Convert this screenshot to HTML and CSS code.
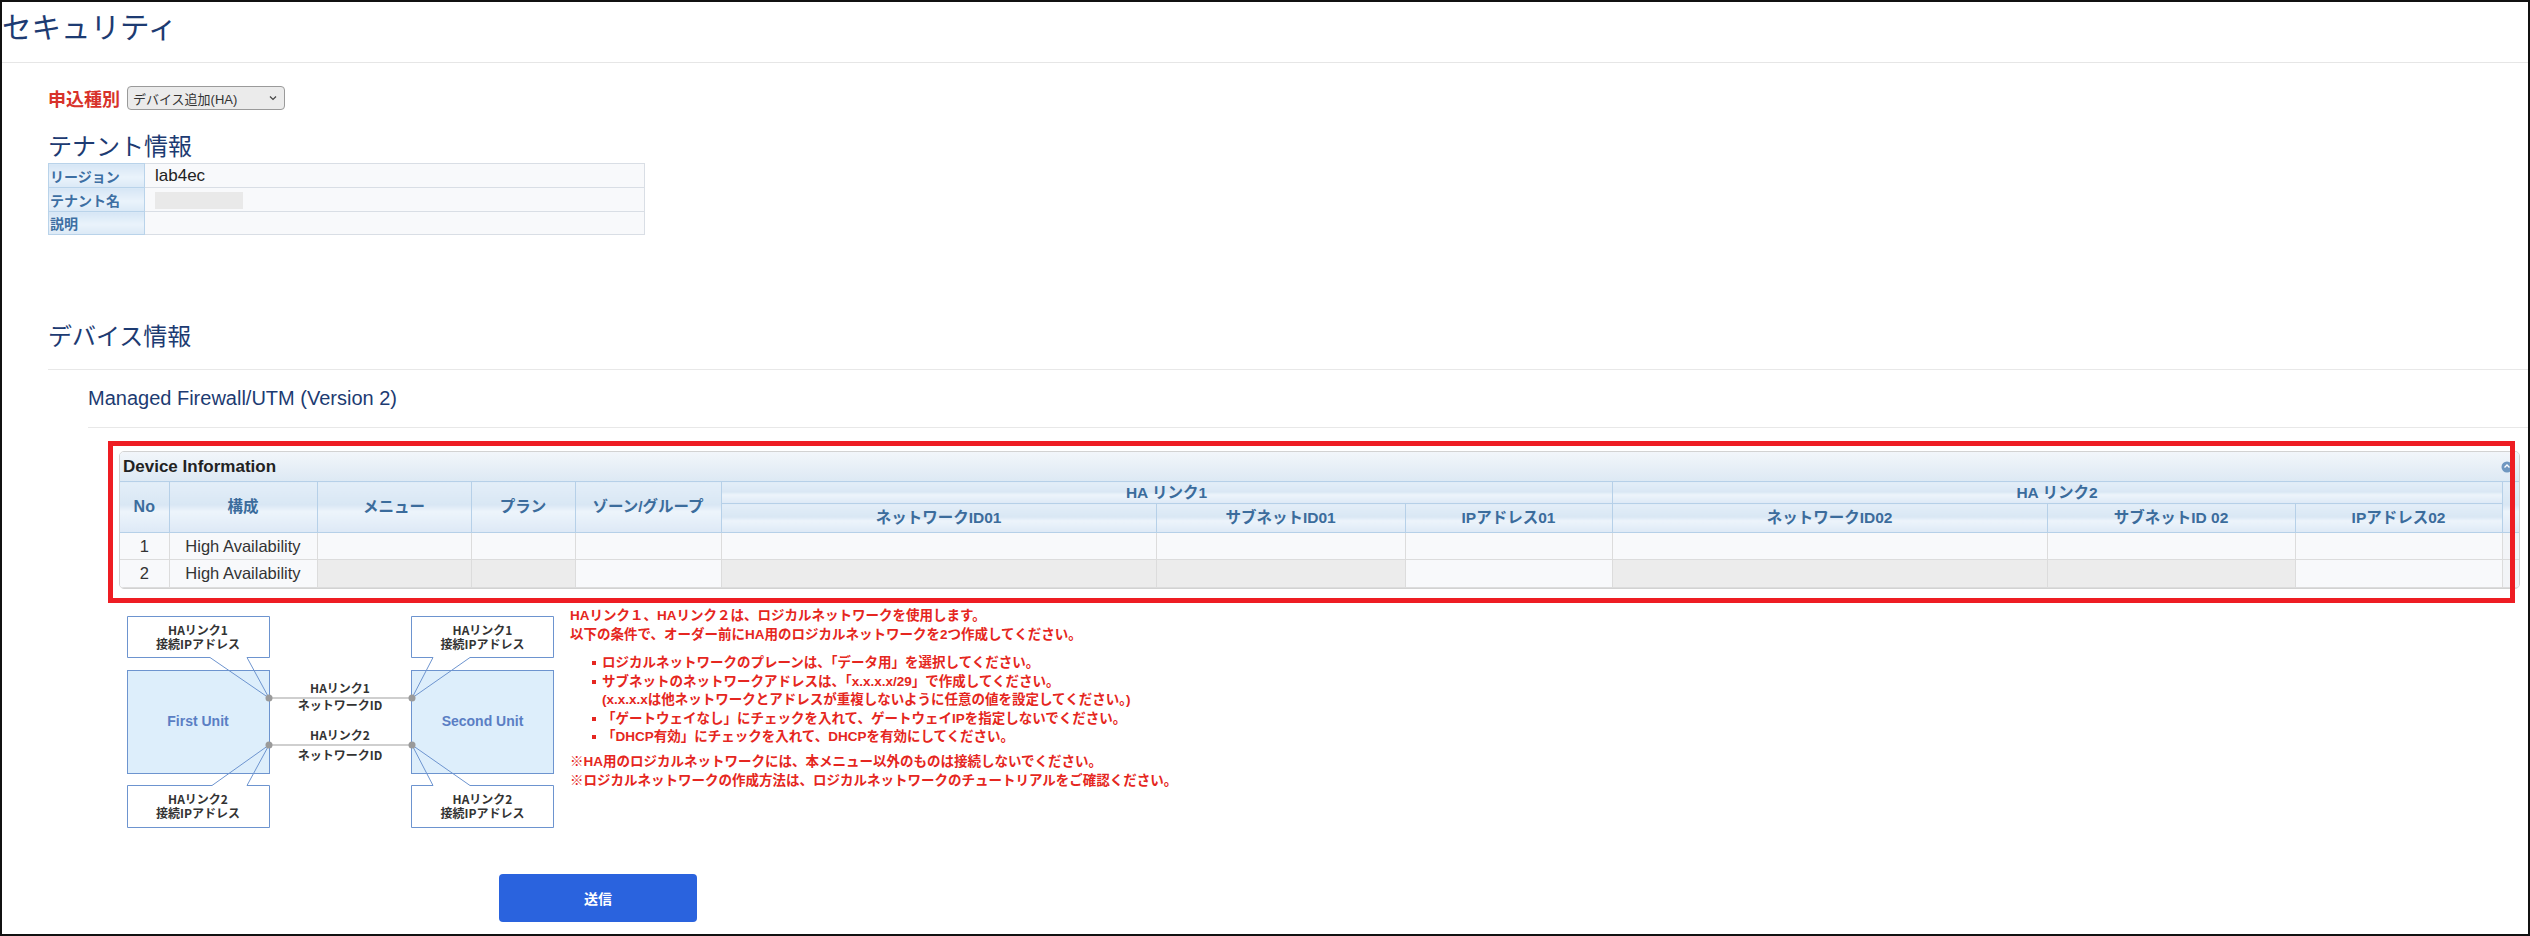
FILE: index.html
```html
<!DOCTYPE html>
<html lang="ja">
<head>
    <meta charset="UTF-8">
    <title>セキュリティ</title>
    <link rel="stylesheet" href="styles.css">
</head>
<body>
<div class="frame">
    <h1 class="page-title">セキュリティ</h1>

    <div class="content">
        <div class="apply-row">
            <span class="apply-label">申込種別</span>
            <div class="fake-select">
                <span>デバイス追加(HA)</span>
                <svg width="8" height="6" viewBox="0 0 8 6"><path d="M1 1.5L4 4.5L7 1.5" fill="none" stroke="#444" stroke-width="1.2"/></svg>
            </div>
        </div>

        <h2 class="section-title tenant-title">テナント情報</h2>
        <table class="tenant-table">
            <tr><th>リージョン</th><td class="val-strong">lab4ec</td></tr>
            <tr><th>テナント名</th><td><span class="masked"></span></td></tr>
            <tr class="last"><th>説明</th><td></td></tr>
        </table>

        <h2 class="section-title device-title">デバイス情報</h2>

        <div class="service">
            <h3 class="service-name">Managed Firewall/UTM (Version 2)</h3>

            <div class="grid-wrap">
                <div class="panel">
                    <div class="panel-head">
                        <span>Device Information</span>
                        <svg width="12" height="12" viewBox="0 0 12 12"><circle cx="6" cy="6" r="5.5" fill="#7097c0"/><path d="M3.5 6.5L6 4L8.5 6.5" fill="none" stroke="#fff" stroke-width="1.4"/></svg>
                    </div>
                    <table class="device-table">
                        <colgroup>
                            <col style="width:49px"><col style="width:148px"><col style="width:154px"><col style="width:104px"><col style="width:146px">
                            <col style="width:435px"><col style="width:249px"><col style="width:207px">
                            <col style="width:435px"><col style="width:248px"><col style="width:207px">
                            <col>
                        </colgroup>
                        <tr class="head-top">
                            <th rowspan="2" class="no">No</th>
                            <th rowspan="2">構成</th>
                            <th rowspan="2">メニュー</th>
                            <th rowspan="2">プラン</th>
                            <th rowspan="2">ゾーン/グループ</th>
                            <th colspan="3">HA リンク1</th>
                            <th colspan="3">HA リンク2</th>
                            <th rowspan="2" class="filler"></th>
                        </tr>
                        <tr class="head-sub">
                            <th>ネットワークID01</th>
                            <th>サブネットID01</th>
                            <th>IPアドレス01</th>
                            <th>ネットワークID02</th>
                            <th>サブネットID 02</th>
                            <th>IPアドレス02</th>
                        </tr>
                        <tr class="row1">
                            <td>1</td><td>High Availability</td><td></td><td></td><td></td>
                            <td></td><td></td><td></td><td></td><td></td><td></td><td class="filler"></td>
                        </tr>
                        <tr class="row2">
                            <td>2</td><td>High Availability</td><td class="off"></td><td class="off"></td><td></td>
                            <td class="off"></td><td class="off"></td><td></td><td class="off"></td><td class="off"></td><td></td><td class="filler"></td>
                        </tr>
                    </table>
                </div>
                <div class="highlight"></div>
            </div>

            <div class="diagram-row">
                <svg class="ha-diagram" width="440" height="220" viewBox="0 0 440 220">
                    <rect class="unit" x="7.5" y="59.5" width="142" height="103"/>
                    <rect class="unit" x="291.5" y="59.5" width="142" height="103"/>
                    <line class="link" x1="149" y1="87" x2="292" y2="87"/>
                    <line class="link" x1="149" y1="134" x2="292" y2="134"/>

                    <path class="callout" d="M127 46.5H149.5V5.5H7.5V46.5H90"/>
                    <path class="pointer" d="M90 46.5L149 87L127 46.5"/>
                    <path class="callout" d="M313 46.5H291.5V5.5H433.5V46.5H350"/>
                    <path class="pointer" d="M313 46.5L292 87L350 46.5"/>
                    <path class="callout" d="M92 174.5H7.5V216.5H149.5V174.5H127"/>
                    <path class="pointer" d="M92 174.5L149 134L127 174.5"/>
                    <path class="callout" d="M313 174.5H291.5V216.5H433.5V174.5H350"/>
                    <path class="pointer" d="M313 174.5L292 134L350 174.5"/>

                    <circle class="dot" cx="149" cy="87" r="3.5"/>
                    <circle class="dot" cx="292" cy="87" r="3.5"/>
                    <circle class="dot" cx="149" cy="134" r="3.5"/>
                    <circle class="dot" cx="292" cy="134" r="3.5"/>

                    <text class="lbl" x="78" y="23.5">HAリンク1</text>
                    <text class="lbl" x="78" y="37.5">接続IPアドレス</text>
                    <text class="lbl" x="362.5" y="23.5">HAリンク1</text>
                    <text class="lbl" x="362.5" y="37.5">接続IPアドレス</text>
                    <text class="lbl" x="78" y="192.5">HAリンク2</text>
                    <text class="lbl" x="78" y="206.5">接続IPアドレス</text>
                    <text class="lbl" x="362.5" y="192.5">HAリンク2</text>
                    <text class="lbl" x="362.5" y="206.5">接続IPアドレス</text>

                    <text class="lbl" x="220" y="81.5">HAリンク1</text>
                    <text class="lbl" x="220" y="98.5">ネットワークID</text>
                    <text class="lbl" x="220" y="128.5">HAリンク2</text>
                    <text class="lbl" x="220" y="148.5">ネットワークID</text>

                    <text class="unit-name" x="78" y="115">First Unit</text>
                    <text class="unit-name" x="362.5" y="115">Second Unit</text>
                </svg>

                <div class="notes">
                    <p>HAリンク１、HAリンク２は、ロジカルネットワークを使用します。<br>以下の条件で、オーダー前にHA用のロジカルネットワークを2つ作成してください。</p>
                    <ul>
                        <li>ロジカルネットワークのプレーンは、「データ用」を選択してください。</li>
                        <li>サブネットのネットワークアドレスは、「x.x.x.x/29」で作成してください。<br>(x.x.x.xは他ネットワークとアドレスが重複しないように任意の値を設定してください。)</li>
                        <li>「ゲートウェイなし」にチェックを入れて、ゲートウェイIPを指定しないでください。</li>
                        <li>「DHCP有効」にチェックを入れて、DHCPを有効にしてください。</li>
                    </ul>
                    <p class="remarks">※HA用のロジカルネットワークには、本メニュー以外のものは接続しないでください。<br>※ロジカルネットワークの作成方法は、ロジカルネットワークのチュートリアルをご確認ください。</p>
                </div>
            </div>

            <button class="submit">送信</button>
        </div>
    </div>
</div>
</body>
</html>
```

FILE: styles.css
```css
body {
    margin: 0;
    font-family: "Liberation Sans", "Noto Sans CJK JP", sans-serif;
    color: #333;
    background: #fff;
}
.frame {
    width: 2530px;
    height: 936px;
    box-sizing: border-box;
    border: 2px solid #111;
    overflow: hidden;
    background: #fff;
}
.page-title {
    margin: 0;
    font-size: 29.5px;
    font-weight: normal;
    color: #1d3b72;
    line-height: 52px;
    padding-bottom: 8px;
    border-bottom: 1px solid #e6e6e6;
}
.content {
    padding-left: 46px;
}
.apply-row {
    display: flex;
    align-items: center;
    gap: 7px;
    margin-top: 23px;
    height: 24px;
}
.apply-label {
    color: #d8322a;
    font-weight: bold;
    font-size: 18px;
}
.fake-select {
    width: 158px;
    height: 24px;
    box-sizing: border-box;
    display: flex;
    align-items: center;
    justify-content: space-between;
    padding: 0 7px 0 5px;
    font-size: 13px;
    color: #333;
    border: 1px solid #9a9a9a;
    border-radius: 4px;
    background: #ebebeb;
}
.section-title {
    margin: 0;
    font-size: 24px;
    font-weight: normal;
    color: #1d3b72;
}
.tenant-title {
    margin-top: 23px;
    line-height: 28px;
    margin-bottom: 2px;
}
.tenant-table {
    border-collapse: collapse;
    width: 597px;
}
.tenant-table th {
    width: 94px;
    height: 23px;
    padding: 0 0 0 1px;
    text-align: left;
    font-size: 14px;
    color: #3d6fa3;
    background: linear-gradient(#d6e6f5, #eaf3fb 55%, #dbe9f6);
    border: 1px solid #b9d3ea;
}
.tenant-table td {
    padding: 0 0 0 10px;
    background: #f8f9fb;
    border: 1px solid #d9dee5;
}
.tenant-table .last th {
    height: 22px;
}
.val-strong {
    font-size: 17px;
    color: #222;
}
.masked {
    display: inline-block;
    width: 88px;
    height: 17px;
    vertical-align: middle;
    background: #e9e9e9;
}
.device-title {
    margin-top: 87px;
    line-height: 30px;
    padding-bottom: 17px;
    border-bottom: 1px solid #e8e8e8;
}
.service {
    margin-left: 40px;
}
.service-name {
    margin: 16px 0 0;
    font-size: 20px;
    font-weight: normal;
    color: #1d3b72;
    line-height: 24px;
    padding-bottom: 17px;
    border-bottom: 1px solid #e8e8e8;
}
.grid-wrap {
    position: relative;
    margin-top: 23px;
    padding: 0 8px 0 31px;
}
.panel {
    border: 1px solid #d2d2d2;
    border-radius: 5px;
    overflow: hidden;
    background: #fff;
}
.panel-head {
    height: 29px;
    display: flex;
    align-items: center;
    justify-content: space-between;
    padding: 0 6px 0 3px;
    font-size: 17px;
    font-weight: bold;
    color: #222;
    background: linear-gradient(#f2f6fa, #dde9f4);
}
.device-table {
    width: 100%;
    table-layout: fixed;
    border-collapse: collapse;
}
.device-table th {
    padding: 0;
    font-size: 15.5px;
    line-height: 18px;
    font-weight: bold;
    color: #3b6c9c;
    text-align: center;
    border: 1px solid #b6d0e8;
    background: linear-gradient(#e3eef8, #d9e7f4 45%, #edf4fb 58%, #dde9f6);
}
.device-table .head-top th {
    height: 21px;
}
.device-table .head-sub th {
    height: 28px;
}
.device-table th.no {
    font-size: 16px;
}
.device-table td {
    padding: 0;
    text-align: center;
    font-size: 16.5px;
    line-height: 19px;
    color: #333;
    background: #f8f9fb;
    border: 1px solid #dcdcdc;
}
.device-table .row1 td {
    height: 26px;
}
.device-table .row2 td {
    height: 27px;
}
.device-table td.off {
    background: #ececec;
}
.device-table td.filler {
    background: #f2f4f7;
}
.device-table tr > :first-child {
    border-left: none;
}
.device-table tr > .filler {
    border-right: none;
}
.highlight {
    position: absolute;
    left: 20px;
    top: -10px;
    width: 2407px;
    height: 162px;
    box-sizing: border-box;
    border: 5px solid #ee1d23;
    pointer-events: none;
}
.diagram-row {
    display: flex;
    align-items: flex-start;
    margin-top: 22px;
    padding-left: 32px;
}
.ha-diagram {
    flex-shrink: 0;
    display: block;
}
.ha-diagram .unit {
    fill: #ddeefb;
    stroke: #6d94cf;
    stroke-width: 1;
}
.ha-diagram .callout {
    fill: #fff;
    stroke: #6d94cf;
    stroke-width: 1;
}
.ha-diagram .pointer {
    fill: none;
    stroke: #6d94cf;
    stroke-width: 1;
}
.ha-diagram .link {
    stroke: #a0a0a0;
    stroke-width: 1.2;
}
.ha-diagram .dot {
    fill: #9a9a9a;
}
.ha-diagram .lbl {
    font-family: "Noto Sans CJK JP", sans-serif;
    font-size: 12px;
    font-weight: bold;
    fill: #333;
    text-anchor: middle;
}
.ha-diagram .unit-name {
    font-family: "Liberation Sans", sans-serif;
    font-size: 14px;
    font-weight: bold;
    fill: #5a7ec4;
    text-anchor: middle;
}
.notes {
    margin: -4px 0 0 10px;
    color: #e52620;
    font-weight: bold;
    font-size: 13.5px;
    line-height: 18.5px;
}
.notes p {
    margin: 0;
}
.notes ul {
    list-style: none;
    margin: 10px 0 0;
    padding-left: 32px;
}
.notes li {
    position: relative;
}
.notes li::before {
    content: "";
    position: absolute;
    left: -10px;
    top: 7px;
    width: 4px;
    height: 4px;
    background: #e52620;
}
.notes .remarks {
    margin-top: 5px;
    line-height: 19px;
}
.submit {
    display: block;
    margin: 43px 0 0 411px;
    width: 198px;
    height: 48px;
    border: none;
    border-radius: 4px;
    background: #2a63de;
    color: #fff;
    font-family: "Noto Sans CJK JP", sans-serif;
    font-size: 14px;
    font-weight: bold;
}
```
